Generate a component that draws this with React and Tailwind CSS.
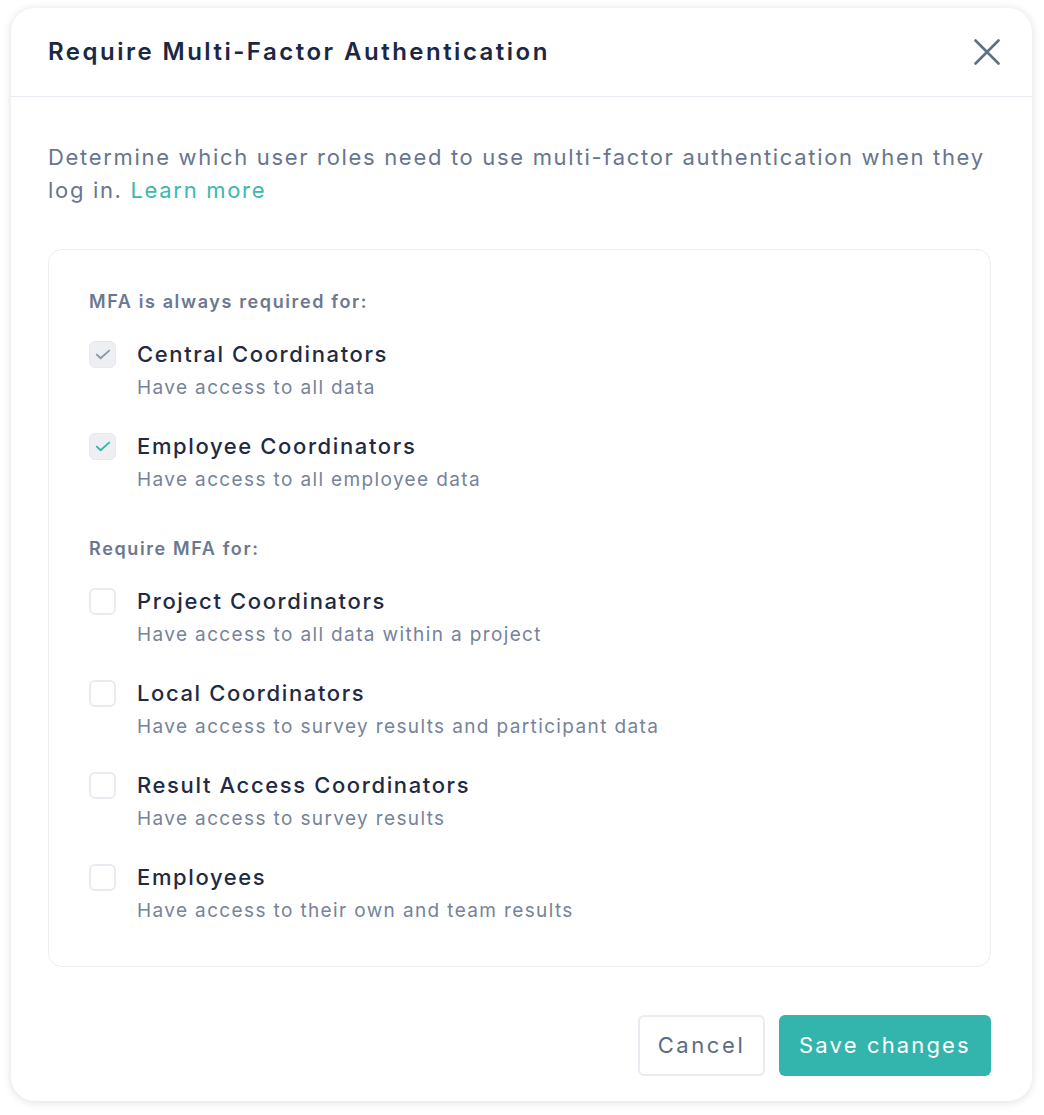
const alwaysRoles = [
  { name: 'Central Coordinators', desc: 'Have access to all data', tone: 'gray' },
  { name: 'Employee Coordinators', desc: 'Have access to all employee data', tone: 'teal' },
]

const optionalRoles = [
  { name: 'Project Coordinators', desc: 'Have access to all data within a project' },
  { name: 'Local Coordinators', desc: 'Have access to survey results and participant data' },
  { name: 'Result Access Coordinators', desc: 'Have access to survey results' },
  { name: 'Employees', desc: 'Have access to their own and team results' },
]

function Check({ tone }) {
  return (
    <svg width="16" height="11" viewBox="0 0 16 11" fill="none">
      <path
        d="M1.8 5.6l3.8 3.6L14.2 1.6"
        stroke={tone === 'teal' ? '#36b7ac' : '#8e97a8'}
        strokeWidth="1.9"
        strokeLinecap="round"
        strokeLinejoin="round"
      />
    </svg>
  )
}

function RoleRow({ role, locked }) {
  return (
    <div className="flex gap-[21px]">
      <div
        className={
          locked
            ? 'mt-[3px] w-[27px] h-[27px] shrink-0 rounded-[6px] bg-[#edeff3] border border-[#e6e9ee] flex items-center justify-center'
            : 'mt-[3px] w-[27px] h-[27px] shrink-0 rounded-[6px] bg-white border-2 border-[#e8ebf0]'
        }
      >
        {locked && <Check tone={role.tone} />}
      </div>
      <div>
        <p className="text-[22px] leading-[32px] font-medium tracking-[1.62px] text-[#1f2a44]">{role.name}</p>
        <p className="text-[19px] leading-[30px] mt-[3px] tracking-[1.37px] text-[#76839a]">{role.desc}</p>
      </div>
    </div>
  )
}

export default function App() {
  return (
    <div
      className="min-h-screen bg-white pt-[8px] pl-[11px] pr-[12px]"
      style={{ fontFamily: 'Inter, "Noto Sans", sans-serif' }}
    >
      <div className="w-[1021px] bg-white rounded-[24px] shadow-[0_1px_8px_rgba(15,23,42,0.14)]">
        <div className="h-[89px] flex items-center justify-between pl-[37px] pr-[30px] border-b border-[#e8ebf0]">
          <h2 className="text-[24px] font-semibold tracking-[2.48px] text-[#1c2743]">Require Multi-Factor Authentication</h2>
          <button className="w-[30px] h-[30px] flex items-center justify-center">
            <svg width="26" height="26" viewBox="0 0 26 26" fill="none">
              <path d="M1.5 1.5l23 23M24.5 1.5l-23 23" stroke="#5f6f88" strokeWidth="2.6" strokeLinecap="round" />
            </svg>
          </button>
        </div>

        <div className="px-[37px] pt-[44px]">
          <p className="text-[22px] leading-[33px] tracking-[1.68px] whitespace-nowrap text-[#67758e]">
            Determine which user roles need to use multi-factor authentication when they
            <br />
            log in. <span className="text-[#3bb8ad]">Learn more</span>
          </p>

          <div className="mt-[42px] w-[943px] border border-[#eceef2] rounded-[14px] px-10 pt-[38px] pb-[40px]">
            <p className="text-[18px] leading-[28px] font-semibold tracking-[1.62px] text-[#6b7890]">MFA is always required for:</p>
            <div className="mt-[22px] flex flex-col gap-[27px]">
              {alwaysRoles.map(r => (
                <RoleRow key={r.name} role={r} locked />
              ))}
            </div>

            <p className="mt-[40px] text-[18px] leading-[28px] font-semibold tracking-[1.62px] text-[#6b7890]">Require MFA for:</p>
            <div className="mt-[22px] flex flex-col gap-[27px]">
              {optionalRoles.map(r => (
                <RoleRow key={r.name} role={r} />
              ))}
            </div>
          </div>
        </div>

        <div className="flex justify-end gap-[14px] pr-[41px] pt-[48px] pb-[25px]">
          <button className="w-[127px] h-[61px] rounded-[6px] border-2 border-[#e8ebf0] bg-white text-[22px] tracking-[2.6px] text-[#5d6b84]">
            Cancel
          </button>
          <button className="w-[212px] h-[61px] rounded-[6px] bg-[#33b5ae] text-[22px] tracking-[2.15px] text-white">
            Save changes
          </button>
        </div>
      </div>
    </div>
  )
}
